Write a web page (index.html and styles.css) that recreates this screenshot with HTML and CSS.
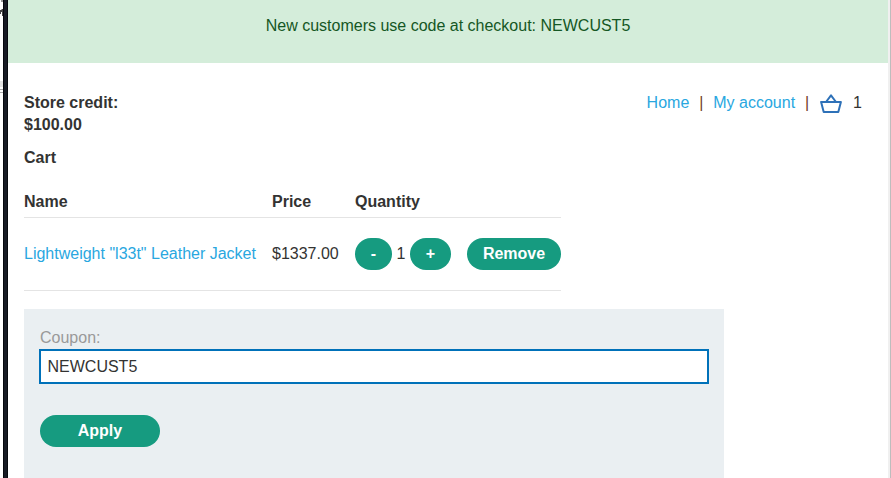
FILE: index.html
```html
<!DOCTYPE html>
<html lang="en">
<head>
<meta charset="utf-8">
<title>Cart</title>
<link rel="stylesheet" href="styles.css">
</head>
<body>
<div class="window">
  <div class="gutter">
    <svg width="3" height="110" viewBox="0 0 3 110">
      <path d="M1 0h2v2H1z" fill="#999"/>
      <path d="M0 10h1l1-1h1v7H2v-4H1v2H0z" fill="#444"/>
      <path d="M0 81h3v6H0z" fill="#e4e4e4"/>
      <path d="M0 89h3v1H0zM0 92h3v1H0z" fill="#aaa"/>
    </svg>
  </div>
  <div class="frame"></div>
  <div class="page">
    <div class="banner">New customers use code at checkout: NEWCUST5</div>
    <main class="content">
      <header class="top">
        <div class="credit">Store credit:<br>$100.00</div>
        <nav class="nav">
          <a href="#">Home</a><span class="bar">|</span><a href="#">My account</a><span class="bar">|</span>
          <a href="#" class="basket" aria-label="Basket"><svg width="22" height="20" viewBox="0 0 22 20" fill="none" stroke="#2e71b8" stroke-width="2" stroke-linejoin="round"><path d="M1.1 8h19.8l-2.6 10.1H3.7z"/><path d="M6 8l5-6.6L16 8"/></svg></a>
          <span>1</span>
        </nav>
      </header>
      <h1 class="title">Cart</h1>
      <section class="table">
        <div class="row head"><span>Name</span><span>Price</span><span>Quantity</span><span></span></div>
        <div class="row item">
          <a href="#">Lightweight "l33t" Leather Jacket</a>
          <span>$1337.00</span>
          <div class="quantity"><button class="button minus">-</button><span>1</span><button class="button plus">+</button></div>
          <button class="button">Remove</button>
        </div>
      </section>
      <form class="coupon">
        <label for="coupon">Coupon:</label>
        <input id="coupon" type="text" value="NEWCUST5">
        <button type="button" class="button apply">Apply</button>
      </form>
    </main>
  </div>
  <div class="scroll"></div>
</div>
</body>
</html>
```
FILE: styles.css
```css
* { box-sizing: border-box; }
body {
  margin: 0;
  background: #fff;
  color: #333332;
  font: 16px/22px "Liberation Sans", Arial, sans-serif;
  overflow: hidden;
}
a { color: #29a7df; text-decoration: none; }
.window { display: flex; height: 478px; overflow: hidden; }
.gutter { width: 3px; }
.gutter svg { display: block; }
.frame { width: 5px; background: #171b24; border: solid #07090e; border-width: 0 1px; }
.page { width: 880px; }
.scroll { width: 3px; background: #f0f0f0; border-right: 1px solid #bdbdbd; }
.banner {
  height: 63px;
  padding-top: 15px;
  background: #d4edda;
  color: #155724;
  text-align: center;
}
.content { padding: 29px 26px 0 16px; }
.top { display: flex; justify-content: space-between; height: 43px; }
.credit, .title, .head { font-weight: bold; }
.nav { display: flex; }
.bar { width: 24px; padding-left: 10px; color: #72401f; }
.nav .bar:nth-of-type(2) { width: 25px; }
.basket { width: 22px; margin-right: 11px; padding-top: 2px; }
.basket svg { display: block; }
.title { margin: 12px 0 0; font-size: 16px; line-height: 22px; }
.table { width: 537px; margin-top: 22px; }
.row {
  display: grid;
  grid-template-columns: 248px 83px 112px 94px;
  border-bottom: 1px solid #e4e4e4;
}
.head { height: 27px; }
.item { height: 73px; align-items: center; }
.quantity { display: flex; align-items: center; }
.quantity span { width: 18px; text-align: center; }
.button {
  height: 32px;
  padding: 0;
  border: 0;
  border-radius: 16px;
  background: #169b80;
  color: #fff;
  font: bold 16px/32px "Liberation Sans", Arial, sans-serif;
}
.minus { width: 37px; }
.plus { width: 41px; }
.coupon {
  display: flex;
  flex-direction: column;
  width: 700px;
  height: 190px;
  margin-top: 18px;
  padding: 18px 15px;
  background: #eaeff2;
}
.coupon label { padding-left: 1px; color: #999; }
.coupon input {
  height: 35px;
  padding: 0 6.5px;
  border: 2px solid #0071b9;
  border-radius: 0;
  outline: 0;
  background: #fff;
  color: #333332;
  font: inherit;
}
.apply { width: 120px; margin: 31px 0 0 1px; }
```
